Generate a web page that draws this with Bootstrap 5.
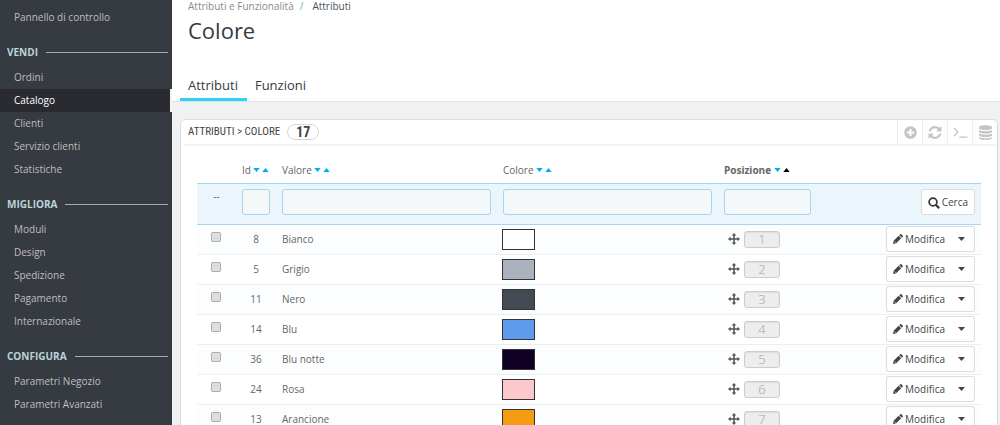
<!DOCTYPE html>
<html lang="it">
<head>
<meta charset="utf-8">
<meta name="viewport" content="width=device-width, initial-scale=1">
<title>Colore</title>
<link href="https://cdn.jsdelivr.net/npm/bootstrap@5.3.0/dist/css/bootstrap.min.css" rel="stylesheet">
<style>
body{font:10px/18px "Open Sans","Noto Sans",sans-serif;color:#666;background:#eff1f2}
a{text-decoration:none;color:inherit}
.shell{height:100vh}
.side{width:172px;background:#363a41;padding-top:6px;color:#bebebe}
.side .nav-link{color:inherit;padding:2px 14px 3px}
.side .nav-link.active{background:#292b30;color:#fff;border-right:2px solid #f4f4f4}
.side h2{font-size:10px;line-height:18px;font-weight:700;color:#bbd4d8;margin:0;padding:14px 4px 5px 7px;gap:8px}
.side h2::after{content:"";flex:1;height:1px;background:#9bb2b7}
.pagehead{border-bottom:1px solid #dfe3e6;padding-left:8px;height:102px}
.breadcrumb{padding-left:8px;padding-top:0;font-size:10px;line-height:12px;color:#8b8b8b}
.breadcrumb-item+.breadcrumb-item::before{color:#72c279;padding-right:9px}
.breadcrumb-item+.breadcrumb-item{padding-left:6px}
.breadcrumb-item.active{color:#4c5159}
h1{font-size:22px;line-height:30px;color:#363a41;padding:3px 8px 0}
.tabs .nav-link{font-size:13px;line-height:20px;padding:6px 9px 3px 8px;color:#363a41;border-bottom:3px solid transparent}
.tabs .nav-link.active{border-color:#2fd0f5}
.panel{border:1px solid #d6dce0;border-radius:5px;margin:17px 2px 0 8px;padding-left:3px}
.panelhead{height:26px;border-bottom:2px solid #f4f5f5;padding-left:4px}
.ptitle{font:11px/18px "Roboto Condensed","Liberation Sans Narrow","Open Sans",sans-serif;color:#444}
.count{font:700 14px/14px "Roboto Condensed","Liberation Sans Narrow","Open Sans",sans-serif;color:#444;background:#fff;border:1px solid #d8d8d8;border-radius:9px;padding:0 8px;margin-left:7px}
.tools button{width:25px;height:24px;border:0;border-left:1px solid #eee;background:none;color:#c4c4c4;padding:0;display:flex;align-items:center;justify-content:center}
.wraptable{padding:11px 16px 0 13px}
.grid{table-layout:fixed;width:100%;margin:0}
.grid th,.grid td{padding:0 6px;vertical-align:middle}
.grid th{height:26px;font-weight:400;white-space:nowrap}
.grid .sorted{font-weight:700}
.filters td{height:41px;background:#ebf5fc;border-top:1px solid #a6d5ee;border-bottom:1px solid #a6d5ee;padding-bottom:3px}
.grid .itemrow td{height:30px;border-bottom:1px solid #eceff0}
.itemrow:nth-child(even) td{background:#fcfdfe}
.filters .form-control{height:26px;min-height:0;padding:2px 6px;font-size:10px;border:1px solid #a6d5ee;border-radius:3px;background:#f5f8f9}
.tri{width:7px;height:4px;fill:#00aff0;vertical-align:2px;margin-left:2px}
.tri.on{fill:#000}
.pick{appearance:none;width:10px;height:10px;border:1px solid #aaa;border-radius:2px;background:#ddd;box-shadow:inset 0 0 1px #fff;vertical-align:middle;margin:0 2px 6px 0;display:inline-block}
.swatch{width:33px;height:21px;border:1px solid #333;margin-left:-1px}
.posnum{width:36px;height:17px;border:1px solid #ccc;border-radius:3px;background:#ededed;color:#a4a4a4;font-weight:300;font-size:13px;line-height:15px;text-align:center;box-shadow:inset 0 1px 1px #ddd}
.act{font-size:10px;line-height:18px;color:#444;background:#fff;border:1px solid #ddd;border-radius:3px;height:26px;padding:0 6px;white-space:nowrap}
.act:hover{background:#f7f7f7}
.act svg{margin-right:2px}
.actions svg{vertical-align:-1px}
.actions .act:first-child{border-right:0;padding-right:3px;border-radius:3px 0 0 3px}
.actions .act:last-child{border-left:0;width:27px;padding:0;border-radius:0 3px 3px 0}
</style>
</head>
<body>
<div class="shell d-flex overflow-hidden">
<nav class="side flex-shrink-0" aria-label="Menu principale">
<div class="nav flex-column"><a class="nav-link" href="#">Pannello di controllo</a></div>
<h2 class="d-flex align-items-center">VENDI</h2>
<div class="nav flex-column"><a class="nav-link" href="#">Ordini</a><a class="nav-link active" href="#">Catalogo</a><a class="nav-link" href="#">Clienti</a><a class="nav-link" href="#">Servizio clienti</a><a class="nav-link" href="#">Statistiche</a></div>
<h2 class="d-flex align-items-center">MIGLIORA</h2>
<div class="nav flex-column"><a class="nav-link" href="#">Moduli</a><a class="nav-link" href="#">Design</a><a class="nav-link" href="#">Spedizione</a><a class="nav-link" href="#">Pagamento</a><a class="nav-link" href="#">Internazionale</a></div>
<h2 class="d-flex align-items-center">CONFIGURA</h2>
<div class="nav flex-column"><a class="nav-link" href="#">Parametri Negozio</a><a class="nav-link" href="#">Parametri Avanzati</a></div>
</nav>
<main class="flex-grow-1">
<header class="pagehead bg-white d-flex flex-column">
<ol class="breadcrumb mb-0"><li class="breadcrumb-item"><a href="#">Attributi e Funzionalità</a></li><li class="breadcrumb-item active">Attributi</li></ol>
<h1 class="mb-0">Colore</h1>
<div class="tabs nav mt-auto"><a class="nav-link active" href="#">Attributi</a><a class="nav-link" href="#">Funzioni</a></div>
</header>
<section class="panel bg-white">
<div class="panelhead d-flex align-items-center">
<span class="ptitle">ATTRIBUTI &gt; COLORE</span><span class="count">17</span>
<div class="tools d-flex ms-auto">
<button type="button" aria-label="Aggiungi"><svg width="13" height="13" viewBox="0 0 13 13"><circle cx="6.5" cy="6.5" r="6.3" fill="currentColor"/><path d="M6.5 3v7M3 6.500h7" stroke="#fff" stroke-width="2"/></svg></button>
<button type="button" aria-label="Aggiorna"><svg width="14" height="13" viewBox="0 0 1536 1536" fill="currentColor"><path d="M1511 928q0 5-1 7-64 268-268 434.500T764 1536q-146 0-282.500-55T238 1324l-129 129q-19 19-45 19t-45-19-19-45V960q0-26 19-45t45-19h448q26 0 45 19t19 45-19 45l-137 137q71 66 161 102t187 36q134 0 250-65t186-179q11-17 53-117 8-23 30-23h192q13 0 22.500 9.500t9.500 22.500zm25-800v448q0 26-19 45t-45 19h-448q-26 0-45-19t-19-45 19-45l138-138Q969 256 768 256q-134 0-250 65T332 500q-11 17-53 117-8 23-30 23H50q-13 0-22.500-9.500T18 608v-7q65-268 270-434.500T768 0q146 0 284 55.500T1297 212l130-129q19-19 45-19t45 19 19 45z"/></svg></button>
<button type="button" aria-label="Mostra query SQL"><svg width="15" height="13" viewBox="0 0 15 13" fill="none" stroke="currentColor" stroke-width="1.300"><path d="M1 2l4 4-4 4M6.500 11.200h8"/></svg></button>
<button type="button" aria-label="Esporta in SQL Manager"><svg width="13" height="15" viewBox="0 0 13 15" fill="currentColor"><path d="M0 2.300C0 -.6 13 -.6 13 2.300v1C13 5.700 0 5.700 0 3.300zM0 5c2 1.600 11 1.600 13 0v1.800C13 9.200 0 9.200 0 6.800zM0 8.500c2 1.600 11 1.600 13 0v1.800c0 2.400-13 2.400-13 0zM0 12c2 1.600 11 1.600 13 0v.9c0 2.600-13 2.600-13 0z"/></svg></button>
</div>
</div>
<div class="wraptable">
<table class="grid">
<colgroup><col style="width:39px"><col style="width:40px"><col><col><col style="width:99px"><col style="width:164px"></colgroup>
<thead>
<tr><th></th><th>Id<svg class="tri" viewBox="0 0 8 5"><path d="M0 0h8L4 5z"/></svg><svg class="tri" viewBox="0 0 8 5"><path d="M0 5h8L4 0z"/></svg></th>
<th>Valore <svg class="tri ms-0" viewBox="0 0 8 5"><path d="M0 0h8L4 5z"/></svg><svg class="tri" viewBox="0 0 8 5"><path d="M0 5h8L4 0z"/></svg></th>
<th>Colore <svg class="tri ms-0" viewBox="0 0 8 5"><path d="M0 0h8L4 5z"/></svg><svg class="tri" viewBox="0 0 8 5"><path d="M0 5h8L4 0z"/></svg></th>
<th class="sorted">Posizione <svg class="tri ms-0" viewBox="0 0 8 5"><path d="M0 0h8L4 5z"/></svg><svg class="tri on" viewBox="0 0 8 5"><path d="M0 5h8L4 0z"/></svg></th><th></th></tr>
</thead>
<tbody id="rows">
<tr class="filters"><td class="text-center pb-3">--</td><td><input class="form-control" aria-label="Id"></td><td><input class="form-control" aria-label="Valore"></td><td><input class="form-control" aria-label="Colore"></td><td><input class="form-control" aria-label="Posizione"></td>
<td class="text-end"><button type="button" class="act"><svg width="12" height="12" viewBox="0 0 12 12" fill="none" stroke="#333"><circle cx="5" cy="5" r="3.900" stroke-width="1.700"/><path d="M8 8l3.200 3.200" stroke-width="2.200"/></svg>Cerca</button></td></tr>
</tbody>
</table>
</div>
</section>
</main>
</div>
<script>
const items=[[8,'Bianco','#ffffff'],[5,'Grigio','#aab2bd'],[11,'Nero','#434a54'],[14,'Blu','#5d9cec'],[36,'Blu notte','#100024'],[24,'Rosa','#fcc8cc'],[13,'Arancione','#f39c11']];
document.getElementById('rows').insertAdjacentHTML('beforeend',items.map(([id,name,color],i)=>`
<tr class="itemrow"><td class="text-center"><input type="checkbox" class="pick" aria-label="Seleziona ${name}"></td>
<td class="text-center">${id}</td><td>${name}</td><td><div class="swatch" style="background:${color}"></div></td>
<td><div class="d-flex align-items-center gap-1 ps-1"><svg width="12" height="12" viewBox="0 0 12 12" fill="#555"><path d="M6 0l2.300 2.600H6.800v2.600h2.600V3.700L12 6 9.400 8.300V6.800H6.800v2.600h1.500L6 12 3.700 9.400h1.500V6.800H2.600v1.500L0 6l2.600-2.300v1.500h2.600V2.600H3.700z"/></svg><span class="posnum">${i+1}</span></div></td>
<td><div class="actions d-flex justify-content-end"><button type="button" class="act"><svg width="10" height="10" viewBox="0 0 11 11" fill="#444"><path d="M0 11l.7-3.500L6.200 2 9 4.800l-5.500 5.500zM6.900 1.300L8 .3q.6-.5 1.200 0l1.500 1.500q.5.600 0 1.200l-1 1z"/><path d="M1.300 8l1.700 1.700" stroke="#fff" stroke-width=".6"/></svg>Modifica</button><button type="button" class="act" aria-label="Altre azioni"><svg width="7" height="4" viewBox="0 0 7 4" fill="#444" class="d-block mx-auto"><path d="M0 0h7L3.500 4z"/></svg></button></div></td></tr>`).join(''));
</script>
<script src="https://cdn.jsdelivr.net/npm/bootstrap@5.3.0/dist/js/bootstrap.bundle.min.js"></script>
</body>
</html>
